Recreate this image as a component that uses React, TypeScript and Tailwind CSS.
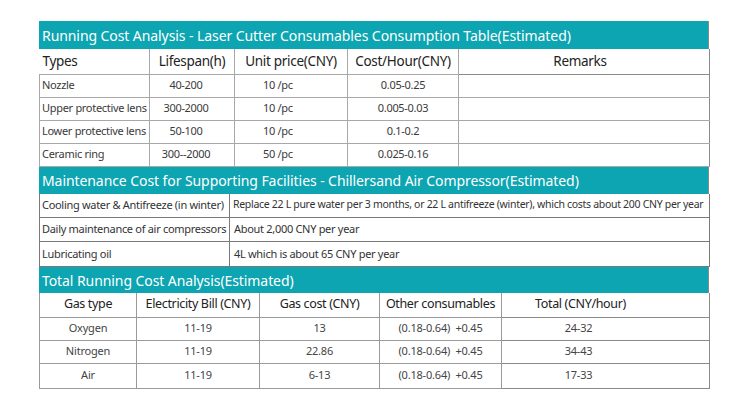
import React from 'react';

const font = { fontFamily: '"Noto Sans", "Liberation Sans", sans-serif' };

const consumables = [
  ['Nozzle', '40-200', '10 /pc', '0.05-0.25'],
  ['Upper protective lens', '300-2000', '10 /pc', '0.005-0.03'],
  ['Lower protective lens', '50-100', '10 /pc', '0.1-0.2'],
  ['Ceramic ring', '300--2000', '50 /pc', '0.025-0.16'],
];

const totals = [
  ['Oxygen', '11-19', '13', '(0.18-0.64)  +0.45', '24-32'],
  ['Nitrogen', '11-19', '22.86', '(0.18-0.64)  +0.45', '34-43'],
  ['Air', '11-19', '6-13', '(0.18-0.64)  +0.45', '17-33'],
];

const SectionTitle = ({ children, h }: { children: React.ReactNode; h: string }) => (
  <div className={`${h} flex items-center bg-[#0ca5b1] pl-[3px] text-[14px] text-white border-r border-[#8a8a8a] tracking-[-0.08px]`}>
    {children}
  </div>
);

const App = () => {
  return (
    <div className="w-[746px] h-[414px] bg-white pt-[21px] pl-[39px]" style={font}>
      <div className="w-[670px] flex flex-col text-[#333]">
        <SectionTitle h="h-[28px]">
          Running Cost Analysis - Laser Cutter Consumables Consumption Table(Estimated)
        </SectionTitle>
        <table className="table-fixed border-collapse w-[670px]">
          <colgroup>
            <col className="w-[110px]" />
            <col className="w-[85px]" />
            <col className="w-[113px]" />
            <col className="w-[111px]" />
            <col className="w-[251px]" />
          </colgroup>
          <tbody>
            <tr className="h-[25px] text-[13.5px] text-[#222] tracking-[-0.3px]">
              <td className="border border-[#a8a8a8] border-t-0 border-l-0 pl-[3px]">Types</td>
              <td className="border border-[#a8a8a8] border-t-0 text-center">Lifespan(h)</td>
              <td className="border border-[#a8a8a8] border-t-0 text-center">Unit price(CNY)</td>
              <td className="border border-[#a8a8a8] border-t-0 text-center">Cost/Hour(CNY)</td>
              <td className="border border-[#8a8a8a] border-t-0 text-center pr-[8px]">Remarks</td>
            </tr>
            {consumables.map((r) => (
              <tr key={r[0]} className="h-[23px] text-[11px] text-[#3a3a3a] tracking-[-0.3px]">
                <td className="border border-[#a8a8a8] pl-[2px] whitespace-nowrap">{r[0]}</td>
                <td className="border border-[#a8a8a8] text-center pr-[12px]">{r[1]}</td>
                <td className="border border-[#a8a8a8] pl-[28px]">{r[2]}</td>
                <td className="border border-[#a8a8a8] text-center">{r[3]}</td>
                <td className="border border-[#a8a8a8] border-r-[#8a8a8a]"></td>
              </tr>
            ))}
          </tbody>
        </table>

        <SectionTitle h="h-[27px]">
          Maintenance Cost for Supporting Facilities - Chillersand Air Compressor(Estimated)
        </SectionTitle>
        <table className="table-fixed border-collapse w-[670px]">
          <colgroup>
            <col className="w-[190px]" />
            <col className="w-[480px]" />
          </colgroup>
          <tbody className="text-[11px] text-[#333] tracking-[-0.3px]">
            <tr className="h-[24px]">
              <td className="border border-[#7a7a7a] border-t-0 pl-[2px] whitespace-nowrap">
                Cooling water &amp; Antifreeze (in winter)
              </td>
              <td className="border border-[#7a7a7a] border-t-0 pl-[3px] whitespace-nowrap text-[10.5px] tracking-[-0.3px]">
                Replace 22 L pure water per 3 months, or 22 L antifreeze (winter), which costs about 200 CNY per year
              </td>
            </tr>
            <tr className="h-[24px]">
              <td className="border border-[#7a7a7a] pl-[2px] whitespace-nowrap">
                Daily maintenance of air compressors
              </td>
              <td className="border border-[#7a7a7a] pl-[4px]">About 2,000 CNY per year</td>
            </tr>
            <tr className="h-[25px]">
              <td className="border border-[#7a7a7a] pl-[2px]">Lubricating oil</td>
              <td className="border border-[#7a7a7a] pl-[4px]">4L which is about 65 CNY per year</td>
            </tr>
          </tbody>
        </table>

        <SectionTitle h="h-[26px]">Total Running Cost Analysis(Estimated)</SectionTitle>
        <table className="table-fixed border-collapse w-[670px]">
          <colgroup>
            <col className="w-[97px]" />
            <col className="w-[123px]" />
            <col className="w-[120px]" />
            <col className="w-[122px]" />
            <col className="w-[208px]" />
          </colgroup>
          <tbody>
            <tr className="h-[24px] text-[12.5px] text-[#222] tracking-[-0.35px]">
              <td className="border border-[#9a9a9a] border-t-0 text-center">Gas type</td>
              <td className="border border-[#9a9a9a] border-t-0 text-center whitespace-nowrap">Electricity Bill (CNY)</td>
              <td className="border border-[#9a9a9a] border-t-0 text-center">Gas cost (CNY)</td>
              <td className="border border-[#9a9a9a] border-t-0 text-center whitespace-nowrap">Other consumables</td>
              <td className="border border-[#8a8a8a] border-t-0 text-center pr-[50px]">Total (CNY/hour)</td>
            </tr>
            {totals.map((r, i) => (
              <tr key={r[0]} className={`${i === 2 ? 'h-[25px]' : 'h-[23px]'} text-[11px] text-[#444] tracking-[-0.2px]`}>
                <td className="border border-[#9a9a9a] text-center">{r[0]}</td>
                <td className="border border-[#9a9a9a] text-center">{r[1]}</td>
                <td className="border border-[#9a9a9a] text-center">{r[2]}</td>
                <td className="border border-[#9a9a9a] text-center whitespace-pre">{r[3]}</td>
                <td className="border border-[#8a8a8a] text-center pr-[54px]">{r[4]}</td>
              </tr>
            ))}
          </tbody>
        </table>
      </div>
    </div>
  );
};

export default App;
